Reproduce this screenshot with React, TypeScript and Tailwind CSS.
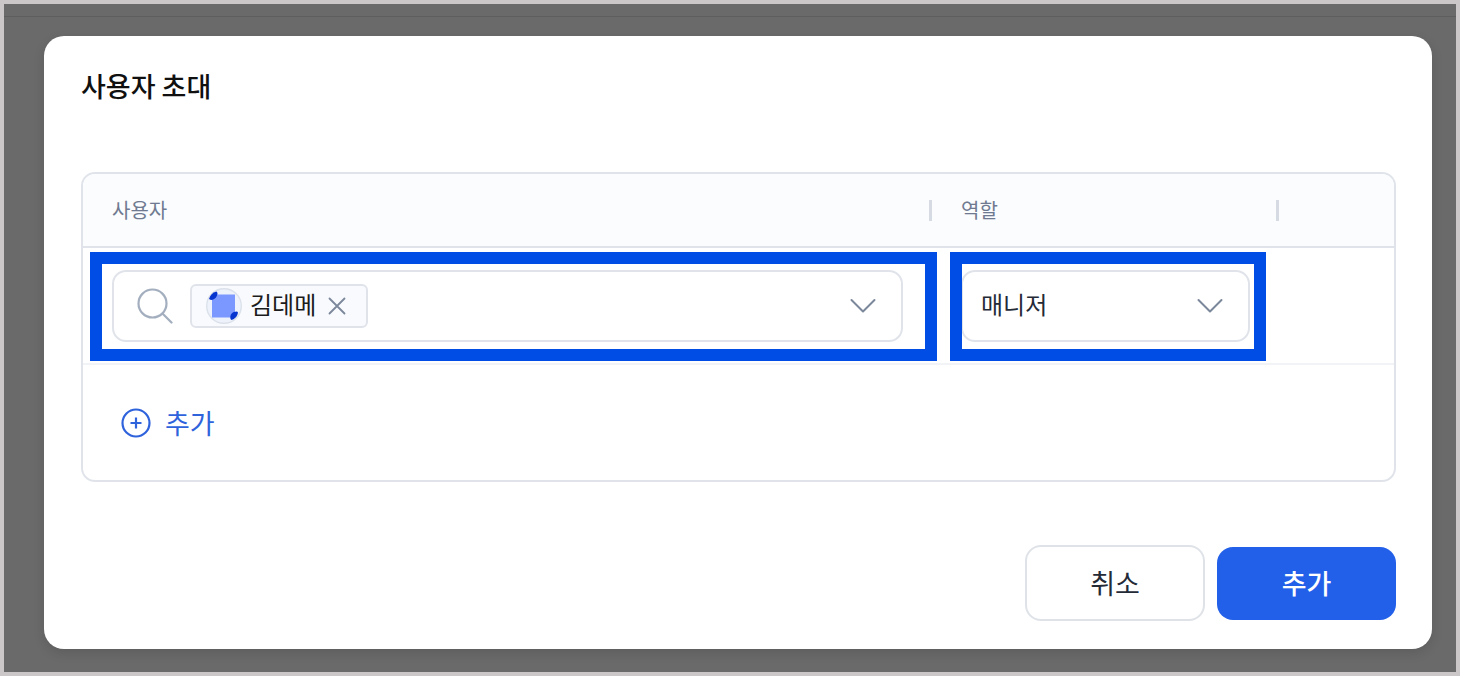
import { useState } from 'react';

function SearchIcon() {
  return (
    <svg className="shrink-0" width="36" height="36" viewBox="0 0 36 36" fill="none" stroke="#a3aebf" strokeWidth="2.2" strokeLinecap="round" aria-hidden="true">
      <circle cx="15.5" cy="15.5" r="14" />
      <path d="M26 26l8.5 8.5" />
    </svg>
  );
}

function ChevronIcon() {
  return (
    <svg width="26" height="16" viewBox="0 0 26 16" fill="none" stroke="#7b879a" strokeWidth="2" strokeLinecap="round" strokeLinejoin="round" aria-hidden="true">
      <path d="M1.5 2L13 13.5 24.5 2" />
    </svg>
  );
}

function CloseIcon() {
  return (
    <svg width="18" height="18" viewBox="0 0 18 18" fill="none" stroke="#7b879a" strokeWidth="1.8" strokeLinecap="round" aria-hidden="true">
      <path d="M1.5 1.5l15 15M16.5 1.5l-15 15" />
    </svg>
  );
}

function PlusCircleIcon() {
  return (
    <svg width="30" height="30" viewBox="0 0 30 30" fill="none" stroke="#2f63dc" strokeWidth="2.2" aria-hidden="true">
      <circle cx="15" cy="15" r="13.5" />
      <path d="M15 9.5v11M9.5 15h11" />
    </svg>
  );
}

function Avatar() {
  return (
    <svg className="shrink-0" width="36" height="36" viewBox="0 0 36 36" aria-hidden="true">
      <circle cx="18" cy="18" r="17.3" fill="#eef2fa" stroke="#dbe1ea" strokeWidth="1.4" />
      <rect x="6" y="6.5" width="23" height="23" fill="#7a98ff" />
      <path d="M3 11C4 7.500 6.500 4.500 10.500 3.500L11.500 5C11.500 8.500 9 11.500 5 12z" fill="#0634cf" />
      <path d="M24.500 31C23.500 27 26 23.500 31 23.500L32 24.500C31.500 28 29 31 25.500 32z" fill="#0634cf" />
    </svg>
  );
}

export default function App() {
  const [role, setRole] = useState('manager');

  return (
    <div className="flex min-h-screen flex-col border-4 border-[#cbc7c8] bg-[#6a6a6a] font-['Noto_Sans_CJK_KR','Noto_Sans',sans-serif]">
      <div className="h-[13px] border-b border-[#5e5e5e]" />

      <div className="flex flex-1 flex-col pt-[19px] pr-6 pb-[23px] pl-10">
        <section
          role="dialog"
          aria-labelledby="invite-title"
          className="flex flex-1 flex-col rounded-[20px] bg-white pt-8 pr-9 pb-7 pl-[37px] shadow-[0_4px_12px_rgba(0,0,0,0.12)]"
        >
          <h1 id="invite-title" className="text-[27px] leading-9 font-medium text-[#101010]">사용자 초대</h1>

          <div className="mt-[68px] overflow-hidden rounded-[14px] border-2 border-[#e0e4ea]">
            <table className="w-full table-fixed border-separate border-spacing-0 text-left">
              <colgroup>
                <col />
                <col className="w-[347px]" />
                <col className="w-[115px]" />
              </colgroup>
              <thead className="bg-[#fafcfe] text-xl text-[#6f7a90]">
                <tr>
                  <th scope="col" className="h-[74px] border-b-2 border-[#e0e4ea] pl-[29px] font-normal">
                    <div className="flex items-center justify-between">
                      사용자
                      <span className="h-[21px] w-[3px] bg-[#d5dae3]" />
                    </div>
                  </th>
                  <th scope="col" className="h-[74px] border-b-2 border-[#e0e4ea] pl-[29px] font-normal">
                    <div className="flex items-center justify-between">
                      역할
                      <span className="h-[21px] w-[3px] bg-[#d5dae3]" />
                    </div>
                  </th>
                  <th className="border-b-2 border-[#e0e4ea]" />
                </tr>
              </thead>
              <tbody>
                <tr>
                  <td className="h-[117px] border-b-2 border-[#f1f3f7] px-[29px]">
                    <div className="relative flex h-[72px] items-center rounded-[14px] border-2 border-[#e0e4ea] pr-[25px] pl-[23px]">
                      <SearchIcon />
                      <span className="ml-[17px] flex h-11 shrink-0 items-center rounded-md border-2 border-[#e0e4ea] bg-[#f8fafd] pr-5 pl-3.5 text-2xl text-[#1b1b1b]">
                        <Avatar />
                        <span className="ml-2 pb-1">김데메</span>
                        <button type="button" aria-label="김데메 삭제" className="ml-3">
                          <CloseIcon />
                        </button>
                      </span>
                      <input type="text" aria-label="사용자 검색" className="h-full min-w-0 flex-1 px-2 text-2xl outline-none" />
                      <button type="button" aria-label="사용자 목록 열기">
                        <ChevronIcon />
                      </button>
                      <span className="pointer-events-none absolute -top-5 -right-9 -bottom-[21px] -left-6 border-12 border-[#004de6]" />
                    </div>
                  </td>
                  <td className="h-[117px] border-b-2 border-[#f1f3f7] px-[29px]">
                    <div className="relative h-[72px]">
                      <select
                        aria-label="역할"
                        value={role}
                        onChange={(e) => setRole(e.target.value)}
                        className="h-full w-full appearance-none rounded-[14px] border-2 border-[#e0e4ea] bg-white pr-14 pb-1 pl-[18px] text-2xl text-[#252a37] outline-none"
                      >
                        <option value="manager">매니저</option>
                      </select>
                      <span className="pointer-events-none absolute inset-y-0 right-[27px] flex items-center">
                        <ChevronIcon />
                      </span>
                      <span className="pointer-events-none absolute -top-[18px] -right-4 -bottom-[19px] -left-[11px] border-12 border-[#004de6]" />
                    </div>
                  </td>
                  <td className="border-b-2 border-[#f1f3f7]" />
                </tr>
              </tbody>
            </table>

            <div className="flex h-[115px] items-center pl-[38px]">
              <button type="button" className="flex items-center gap-3.5 text-[27px] leading-9 text-[#2f63dc]">
                <PlusCircleIcon />
                추가
              </button>
            </div>
          </div>

          <div className="mt-auto flex items-center justify-end gap-3 text-[27px]">
            <button type="button" className="h-[76px] w-[180px] rounded-2xl border-2 border-[#dfe3e8] bg-white text-[#252a37]">
              취소
            </button>
            <button type="button" className="h-[73px] w-[179px] rounded-2xl bg-[#2360e9] font-medium text-white">
              추가
            </button>
          </div>
        </section>
      </div>
    </div>
  );
}
